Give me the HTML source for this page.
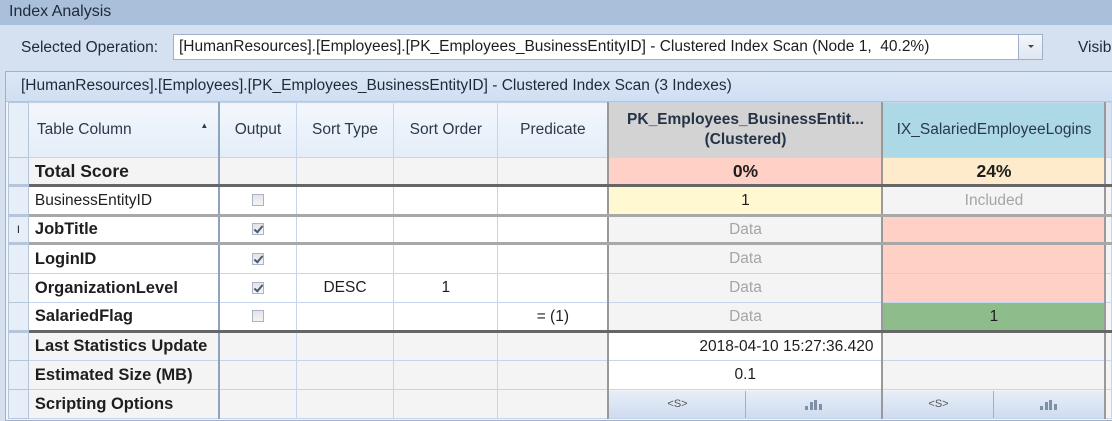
<!DOCTYPE html>
<html><head><meta charset="utf-8"><style>
*{box-sizing:border-box;margin:0;padding:0}
body{width:1112px;height:418px;overflow:hidden;background:#d5e1f0;font-family:"Liberation Sans","DejaVu Sans",sans-serif;font-size:15.5px;color:#1e1e1e;position:relative}
.title{position:absolute;left:0;top:0;width:1112px;height:25px;background:#a9bfda;padding:3px 9px;font-size:16px;color:#1e2a3a}
.lbl{position:absolute;left:21px;top:39px;color:#1e2a3a}
.combo{position:absolute;left:173px;top:34px;width:870px;height:26px;background:#fff;border:1px solid #9fb0c8;padding:3px 5px}
.dd{position:absolute;right:0;top:0;width:24px;height:24px;border-left:1px solid #9fb0c8;background:linear-gradient(#f4f7fb,#dfe7f2)}
.dd:after{content:"";position:absolute;left:9px;top:10px;border:3px solid transparent;border-top:3px solid #444}
.vis{position:absolute;left:1078px;top:39px;color:#1e2a3a}
.panel{position:absolute;left:5px;top:71px;width:1110px;height:350px;border:1px solid #9fb0c8;background:#f4f4f4}
.ghead{position:absolute;left:6px;top:72px;width:1106px;height:30px;background:linear-gradient(#dbe7f5,#cfdff2);padding:5px 15px;color:#1e2a3a;border-bottom:1px solid #b5c6dc}
table{position:absolute;left:8px;top:102px;border-collapse:collapse;table-layout:fixed}
td{border:1px solid #c4d5ec;white-space:nowrap;overflow:hidden;background:#f4f4f4}
tr.h td{background:linear-gradient(#f3f7fc,#e4edf8);text-align:center;color:#2a3a4a;height:55px}
td.sel{background:#e6eef8 !important;border-color:#b5c6dc !important}
td.c1{border-right:2px solid #8ea3c0}
.ts td{height:28px;font-weight:bold;font-size:17.5px}
.w{background:#fff}
.b{font-weight:bold;font-size:16.5px}
.ctr{text-align:center}
td.pk{border-left:2px solid #999;border-right:2px solid #999}
td.ix{border-right:2px solid #999}
.thick td{border-bottom:3px solid #666}
.jt td{border-top:3px solid #a8a8a8;border-bottom:3px solid #a8a8a8}
.gray{color:#a5a5a5}
.cb{display:inline-block;width:12px;height:12px;border:1px solid #a9b5c6;background:linear-gradient(#e4e4e4,#f4f4f4);position:relative;vertical-align:middle}
.cb.k:after{content:"";position:absolute;left:3px;top:0px;width:3px;height:7px;border:solid #4a5a70;border-width:0 2px 2px 0;transform:rotate(40deg)}
.btn{display:inline-block;height:27px;background:linear-gradient(#e6eef9,#cfdcef);border-right:1px solid #9fb0c8;font-size:11px;color:#555;text-align:center;line-height:27px;vertical-align:top;position:relative}
.bars{position:absolute;left:50%;top:9px;margin-left:-9px;width:18px;height:10px}
.bars i{position:absolute;bottom:0;width:3px;background:#7f8fa6}
</style></head><body>
<div class="title">Index Analysis</div>
<div class="lbl">Selected Operation:</div>
<div class="combo">[HumanResources].[Employees].[PK_Employees_BusinessEntityID] - Clustered Index Scan (Node 1,&nbsp; 40.2%)<div class="dd"></div></div>
<div class="vis">Visib</div>
<div class="panel"></div>
<div class="ghead">[HumanResources].[Employees].[PK_Employees_BusinessEntityID] - Clustered Index Scan (3 Indexes)</div>
<table>
<colgroup><col style="width:20px"><col style="width:191px"><col style="width:77px"><col style="width:98px"><col style="width:104px"><col style="width:111px"><col style="width:274px"><col style="width:223px"><col style="width:6px"></colgroup>
<tr class="h"><td class="sel"></td><td class="c1" style="text-align:left;padding-left:8px">Table Column<span style="float:right;margin-right:10px;font-size:8px">▲</span></td><td>Output</td><td>Sort Type</td><td>Sort Order</td><td>Predicate</td><td class="pk" style="background:#d3d3d3;font-weight:bold;color:#243448;line-height:20px">PK_Employees_BusinessEntit...<br>(Clustered)</td><td class="ix" style="background:#add8e6">IX_SalariedEmployeeLogins</td><td style="background:#d5e1f0"></td></tr>
<tr class="ts thick"><td class="sel"></td><td class="c1" style="padding-left:6px">Total Score</td><td></td><td></td><td></td><td></td><td class="pk ctr" style="background:#ffd0c5">0%</td><td class="ix ctr" style="background:#fdebcb">24%</td><td></td></tr>
<tr style="height:30px"><td class="sel"></td><td class="c1 w" style="padding-left:6px">BusinessEntityID</td><td class="w ctr"><span class="cb"></span></td><td class="w"></td><td class="w"></td><td class="w"></td><td class="pk ctr" style="background:#fff8d0">1</td><td class="ix ctr gray">Included</td><td></td></tr>
<tr class="jt" style="height:28px"><td class="sel" style="font-size:11px;text-align:center">I</td><td class="c1 w b" style="padding-left:6px">JobTitle</td><td class="w ctr"><span class="cb k"></span></td><td class="w"></td><td class="w"></td><td class="w"></td><td class="pk ctr gray">Data</td><td class="ix" style="background:#ffd0c5"></td><td></td></tr>
<tr style="height:30px"><td class="sel"></td><td class="c1 w b" style="padding-left:6px">LoginID</td><td class="w ctr"><span class="cb k"></span></td><td class="w"></td><td class="w"></td><td class="w"></td><td class="pk ctr gray">Data</td><td class="ix" style="background:#ffd0c5"></td><td></td></tr>
<tr style="height:29px"><td class="sel"></td><td class="c1 w b" style="padding-left:6px">OrganizationLevel</td><td class="w ctr"><span class="cb k"></span></td><td class="w ctr">DESC</td><td class="w ctr">1</td><td class="w"></td><td class="pk ctr gray">Data</td><td class="ix" style="background:#ffd0c5"></td><td></td></tr>
<tr class="thick" style="height:29px"><td class="sel"></td><td class="c1 w b" style="padding-left:6px">SalariedFlag</td><td class="w ctr"><span class="cb"></span></td><td class="w"></td><td class="w"></td><td class="w ctr">= (1)</td><td class="pk ctr gray">Data</td><td class="ix ctr" style="background:#8fbc8b">1</td><td></td></tr>
<tr style="height:29px"><td class="sel"></td><td class="c1 b" style="padding-left:6px">Last Statistics Update</td><td></td><td></td><td></td><td></td><td class="pk w" style="text-align:right;padding-right:8px">2018-04-10 15:27:36.420</td><td class="ix"></td><td></td></tr>
<tr style="height:29px"><td class="sel"></td><td class="c1 b" style="padding-left:6px">Estimated Size (MB)</td><td></td><td></td><td></td><td></td><td class="pk w" style="padding-left:125px">0.1</td><td class="ix"></td><td></td></tr>
<tr style="height:29px"><td class="sel"></td><td class="c1 b" style="padding-left:6px">Scripting Options</td><td></td><td></td><td></td><td></td><td class="pk" style="padding:0"><span class="btn" style="width:137px">&lt;S&gt;</span><span class="btn" style="width:135px;border-right:0"><span class="bars"><i style="left:0;height:4px"></i><i style="left:5px;height:8px"></i><i style="left:9px;height:10px"></i><i style="left:14px;height:6px"></i></span></span></td><td class="ix" style="padding:0"><span class="btn" style="width:111px">&lt;S&gt;</span><span class="btn" style="width:110px;border-right:0"><span class="bars"><i style="left:0;height:4px"></i><i style="left:5px;height:8px"></i><i style="left:9px;height:10px"></i><i style="left:14px;height:6px"></i></span></span></td><td></td></tr>
</table>
</body></html>
